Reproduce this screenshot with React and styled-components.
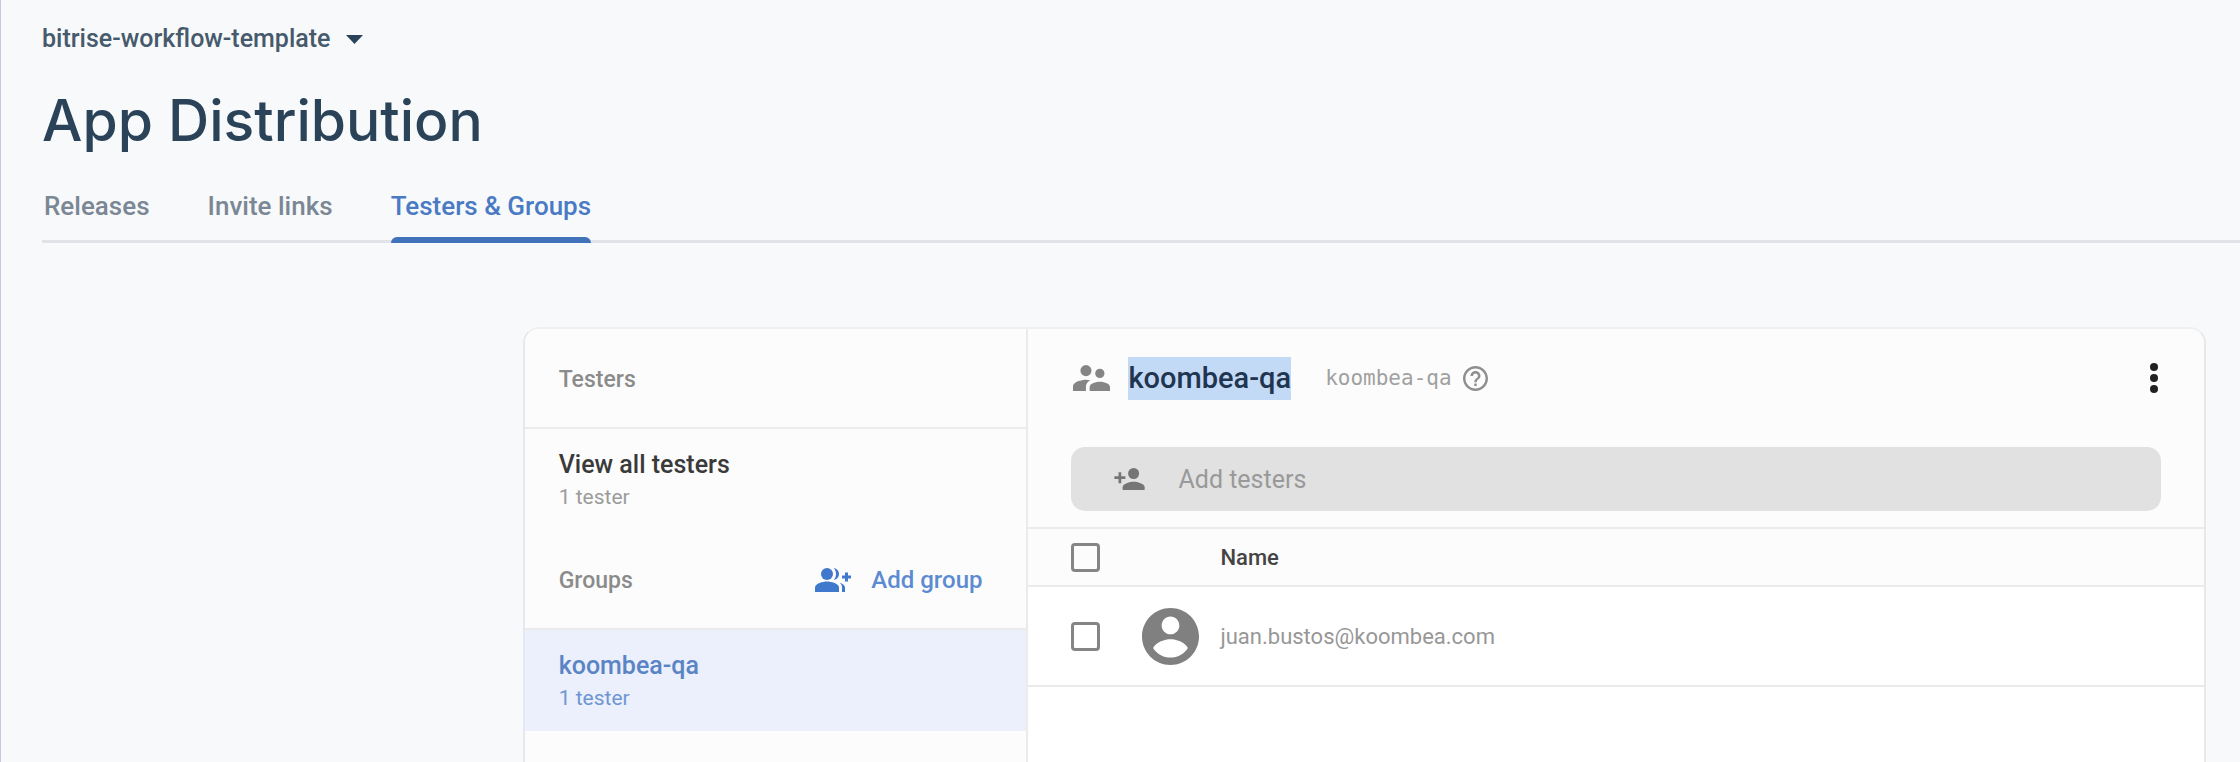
import React from "react";
import styled, { createGlobalStyle, css } from "styled-components";

const GlobalStyle = createGlobalStyle`
  *, *::before, *::after { box-sizing: border-box; }
  body { margin: 0; background: #f7f9fb; }
  body, button, input { font-family: Roboto, "Liberation Sans", sans-serif; }
  button { padding: 0; border: 0; background: none; cursor: pointer; }
`;

const line = "2px solid #ebebec";

const Page = styled.div`
  display: flex;
  flex-direction: column;
  min-height: 100vh;
  border-left: 1px solid #c3cbda;
`;

const PageHeader = styled.header`
  display: flex;
  flex-direction: column;
  align-items: flex-start;
  padding: 23px 0 0 41px;
`;

const ProjectButton = styled.button`
  display: flex;
  align-items: center;
  gap: 16px;
  font-size: 25px;
  font-weight: 500;
  line-height: 32px;
  color: #475a6c;
`;

const Title = styled.h1`
  margin: 30px 0 12px;
  font: 500 57px/72px Inter, "Liberation Sans", sans-serif;
  color: #2b4358;
`;

const Tabs = styled.nav`
  display: flex;
  align-self: stretch;
  gap: 58px;
  padding-left: 2px;
  border-bottom: 3px solid #e2e3e8;
`;

const Tab = styled.a`
  position: relative;
  margin-bottom: -3px;
  font-size: 26px;
  font-weight: 500;
  line-height: 74px;
  text-decoration: none;
  color: #7b8794;

  ${({ $active }) => $active && css`
    color: #4a7ac4;

    &::after {
      content: "";
      position: absolute;
      inset: auto 0 0;
      height: 6px;
      border-radius: 6px 6px 0 0;
      background: #4272b9;
    }
  `}
`;

const Card = styled.main`
  display: flex;
  flex: 1;
  margin: 84px 34px 0 23.3%;
  border: 2px solid #e6e8eb;
  border-top-color: #eff0f2;
  border-bottom: 0;
  border-radius: 16px 16px 0 0;
  background: #fff;
  overflow: hidden;
`;

const Sidebar = styled.aside`
  flex: 0 0 30%;
  border-right: ${line};
  background: #fcfcfc;
`;

const SectionHeader = styled.div`
  display: flex;
  align-items: center;
  justify-content: space-between;
  height: 100px;
  padding: 2px 44px 0 34px;
  border-bottom: ${line};
`;

const SectionTitle = styled.h2`
  margin: 0;
  font-size: 23px;
  font-weight: 500;
  color: #8b8b8b;
`;

const AddGroupButton = styled.button`
  display: flex;
  align-items: center;
  gap: 20px;
  font-size: 24px;
  font-weight: 500;
  color: #5c8bd2;
`;

const GroupItem = styled.button`
  display: flex;
  flex-direction: column;
  width: 100%;
  padding: 19px 34px 16px;
  text-align: left;
  background: ${({ $selected }) => ($selected ? "#ebf0fc" : "transparent")};
  color: ${({ $selected }) => ($selected ? "#5a84c4" : "#3a3a3a")};
`;

const GroupName = styled.span`
  font-size: 25px;
  font-weight: 500;
  line-height: 33px;
`;

const GroupCount = styled.span`
  font-size: 21px;
  line-height: 33px;
  color: ${({ $selected }) => ($selected ? "#6f96d2" : "#9b9b9b")};
`;

const Detail = styled.section`
  flex: 1;
  min-width: 0;
`;

const DetailTop = styled.div`
  padding: 0 43px 16px;
  border-bottom: ${line};
  background: #fcfcfc;
`;

const DetailHeader = styled.div`
  display: flex;
  align-items: center;
  height: 98px;
  padding-left: 2px;
  margin-bottom: 20px;
`;

const DetailName = styled.h2`
  margin: 0 34px 0 18px;
  font-size: 29px;
  font-weight: 500;
  line-height: 43px;
  color: #1f3550;
  background: #c3daf7;
`;

const Alias = styled.span`
  margin-right: 11px;
  font-family: "DejaVu Sans Mono", monospace;
  font-size: 21px;
  color: #a0a0a0;
`;

const IconButton = styled.button`
  display: flex;
  justify-content: center;
  width: ${({ $width }) => $width}px;
  margin-left: ${({ $end }) => ($end ? "auto" : "0")};
`;

const AddField = styled.label`
  display: flex;
  align-items: center;
  gap: 33px;
  height: 64px;
  padding: 0 43px;
  border-radius: 14px;
  background: #e1e1e1;
`;

const AddInput = styled.input`
  flex: 1;
  min-width: 0;
  padding: 0;
  border: 0;
  outline: 0;
  background: none;
  font-size: 25px;

  &::placeholder { color: #999; opacity: 1; }
`;

const MemberTable = styled.table`
  width: 100%;
  table-layout: fixed;
  border-collapse: separate;
  border-spacing: 0;
  font-size: 22px;
`;

const Row = styled.tr`
  height: ${({ $head }) => ($head ? 58 : 100)}px;
  background: ${({ $head }) => ($head ? "#fcfcfc" : "#fff")};
`;

const Cell = styled.td`
  padding: 0;
  border-bottom: ${line};
  text-align: left;
  font-weight: 400;
  color: #979797;
`;

const CheckCell = styled(Cell)`
  width: 114px;
  padding-left: 43px;
`;

const AvatarCell = styled(Cell)`
  width: 78px;
`;

const NameHeading = styled(Cell)`
  font-weight: 500;
  color: #444;
`;

const Checkbox = styled.input`
  display: block;
  appearance: none;
  width: 29px;
  height: 29px;
  margin: 0;
  border: 3px solid #858585;
  border-radius: 4px;
  background: transparent;

  &:checked { background: #858585; }
`;

const Icon = styled.svg`
  display: block;
  flex: none;
  fill: ${({ $color }) => $color};
`;

const CaretIcon = () => (
  <Icon $color="#2b4358" width="17" height="9" viewBox="0 0 17 9" aria-hidden="true">
    <path d="M0 0h17L8.500 9z" />
  </Icon>
);

const AddGroupIcon = () => (
  <Icon $color="#3f78cd" width="36" height="24" viewBox="0 4 24 16" aria-hidden="true">
    <path d="M22 9V7h-2v2h-2v2h2v2h2v-2h2V9h-2z" />
    <circle cx="8" cy="8" r="4" />
    <path d="M8 13c-2.670 0-8 1.340-8 4v3h16v-3c0-2.660-5.330-4-8-4z" />
    <path d="M12.510 4.050C13.430 5.110 14 6.490 14 8s-.57 2.890-1.490 3.950C14.470 11.700 16 10.040 16 8s-1.530-3.700-3.490-3.950z" />
    <path d="M16.530 13.830C17.420 14.660 18 15.700 18 17v3h2v-3c0-1.450-1.590-2.510-3.470-3.170z" />
  </Icon>
);

const GroupIcon = () => (
  <Icon $color="#858585" width="37" height="26" viewBox="2 5 20 14" aria-hidden="true">
    <circle cx="16.500" cy="9.500" r="2.500" />
    <circle cx="9" cy="8" r="3" />
    <path d="M16.500 14c-1.830 0-5.500.92-5.500 2.750V19h11v-2.250c0-1.830-3.670-2.750-5.500-2.750z" />
    <path d="M9 13c-2.330 0-7 1.170-7 3.500V19h7v-2.250c0-.85.33-2.340 2.370-3.470C10.500 13.100 9.660 13 9 13z" />
  </Icon>
);

const AddPersonIcon = () => (
  <Icon $color="#757575" width="31" height="22" viewBox="1 4 22 16" aria-hidden="true">
    <circle cx="15" cy="8" r="4" />
    <path d="M6 10V7H4v3H1v2h3v3h2v-3h3v-2H6z" />
    <path d="M15 14c-2.670 0-8 1.340-8 4v2h16v-2c0-2.660-5.330-4-8-4z" />
  </Icon>
);

const HelpIcon = () => (
  <Icon $color="#8f8f8f" width="25" height="25" viewBox="2 2 20 20" aria-hidden="true">
    <path d="M11 18h2v-2h-2v2zm1-16C6.480 2 2 6.480 2 12s4.480 10 10 10 10-4.480 10-10S17.520 2 12 2zm0 18c-4.410 0-8-3.590-8-8s3.590-8 8-8 8 3.590 8 8-3.590 8-8 8zm0-14c-2.210 0-4 1.790-4 4h2c0-1.100.9-2 2-2s2 .9 2 2c0 2-3 1.750-3 5h2c0-2.250 3-2.500 3-5 0-2.210-1.790-4-4-4z" />
  </Icon>
);

const MoreIcon = () => (
  <Icon $color="#212121" width="8" height="30" viewBox="0 0 8 30" aria-hidden="true">
    <circle cx="4" cy="4" r="4" />
    <circle cx="4" cy="15" r="4" />
    <circle cx="4" cy="26" r="4" />
  </Icon>
);

const AvatarIcon = () => (
  <Icon $color="#808080" width="57" height="57" viewBox="2 2 20 20" aria-hidden="true">
    <path d="M12 2C6.480 2 2 6.480 2 12s4.480 10 10 10 10-4.480 10-10S17.520 2 12 2zm0 3c1.700 0 3.100 1.400 3.100 3.100s-1.400 3.100-3.100 3.100-3.100-1.400-3.100-3.100S10.300 5 12 5zm0 14.400c-2.500 0-4.800-1.300-6.100-3.400C7.100 13.900 10 13 12 13s4.900.9 6.100 3c-1.300 2.100-3.600 3.400-6.100 3.400z" />
  </Icon>
);

const tabs = ["Releases", "Invite links", "Testers & Groups"];
const members = ["juan.bustos@koombea.com"];

function Group({ name, count, selected }) {
  return (
    <GroupItem type="button" $selected={selected}>
      <GroupName>{name}</GroupName>
      <GroupCount $selected={selected}>{count}</GroupCount>
    </GroupItem>
  );
}

export default function App() {
  return (
    <>
      <GlobalStyle />
      <Page>
        <PageHeader>
          <ProjectButton type="button">
            bitrise-workflow-template
            <CaretIcon />
          </ProjectButton>
          <Title>App Distribution</Title>
          <Tabs>
            {tabs.map((tab) => (
              <Tab key={tab} href="#" $active={tab === "Testers & Groups"}>{tab}</Tab>
            ))}
          </Tabs>
        </PageHeader>

        <Card>
          <Sidebar>
            <SectionHeader>
              <SectionTitle>Testers</SectionTitle>
            </SectionHeader>
            <Group name="View all testers" count="1 tester" />
            <SectionHeader>
              <SectionTitle>Groups</SectionTitle>
              <AddGroupButton type="button">
                <AddGroupIcon />
                Add group
              </AddGroupButton>
            </SectionHeader>
            <Group name="koombea-qa" count="1 tester" selected />
          </Sidebar>

          <Detail>
            <DetailTop>
              <DetailHeader>
                <GroupIcon />
                <DetailName>koombea-qa</DetailName>
                <Alias>koombea-qa</Alias>
                <IconButton type="button" $width={25} aria-label="Help">
                  <HelpIcon />
                </IconButton>
                <IconButton type="button" $width={14} $end aria-label="More options">
                  <MoreIcon />
                </IconButton>
              </DetailHeader>
              <AddField>
                <AddPersonIcon />
                <AddInput type="text" placeholder="Add testers" aria-label="Add testers" />
              </AddField>
            </DetailTop>
            <MemberTable>
              <thead>
                <Row $head>
                  <CheckCell>
                    <Checkbox type="checkbox" aria-label="Select all testers" />
                  </CheckCell>
                  <AvatarCell />
                  <NameHeading as="th" scope="col">Name</NameHeading>
                </Row>
              </thead>
              <tbody>
                {members.map((email) => (
                  <Row key={email}>
                    <CheckCell>
                      <Checkbox type="checkbox" aria-label={`Select ${email}`} />
                    </CheckCell>
                    <AvatarCell><AvatarIcon /></AvatarCell>
                    <Cell>{email}</Cell>
                  </Row>
                ))}
              </tbody>
            </MemberTable>
          </Detail>
        </Card>
      </Page>
    </>
  );
}
